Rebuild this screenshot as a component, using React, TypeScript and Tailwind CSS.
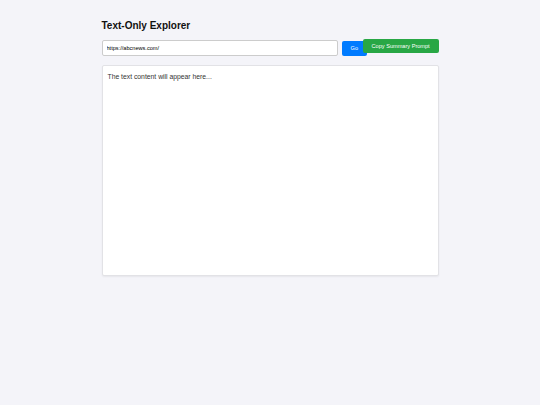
export default function App() {
  return (
    <div
      className="min-h-[405px] w-full bg-[#f4f4f9] text-[#333]"
      style={{ fontFamily: '"Liberation Sans", Arial, sans-serif' }}
    >
      <div className="mx-auto w-[337px] pt-[20px]">
        <h1 className="text-[10px] font-bold leading-[12px] text-[#111]">
          Text-Only Explorer
        </h1>

        <div className="mt-[8px] flex items-start">
          <input
            defaultValue="https://abcnews.com/"
            className="h-[16px] w-[237px] rounded-[2px] border border-[#ccc] bg-white px-[4px] text-[5.6px] text-black outline-none"
          />
          <button className="ml-[4px] mt-px h-[15px] w-[25px] rounded-[2px] bg-[#007bff] text-[5.6px] text-white">
            Go
          </button>
          <button className="relative -ml-[4px] -mt-px h-[14px] w-[76px] rounded-[2px] bg-[#28a745] text-[5.6px] text-white">
            Copy Summary Prompt
          </button>
        </div>

        <div className="mt-[9px] h-[211px] rounded-[2px] border border-[#e2e2e6] bg-white px-[5px] pt-[6px] shadow-[0_1px_2px_rgba(0,0,0,0.06)]">
          <p className="text-[6.8px] leading-[9px] text-[#333]">
            The text content will appear here...
          </p>
        </div>
      </div>
    </div>
  )
}
